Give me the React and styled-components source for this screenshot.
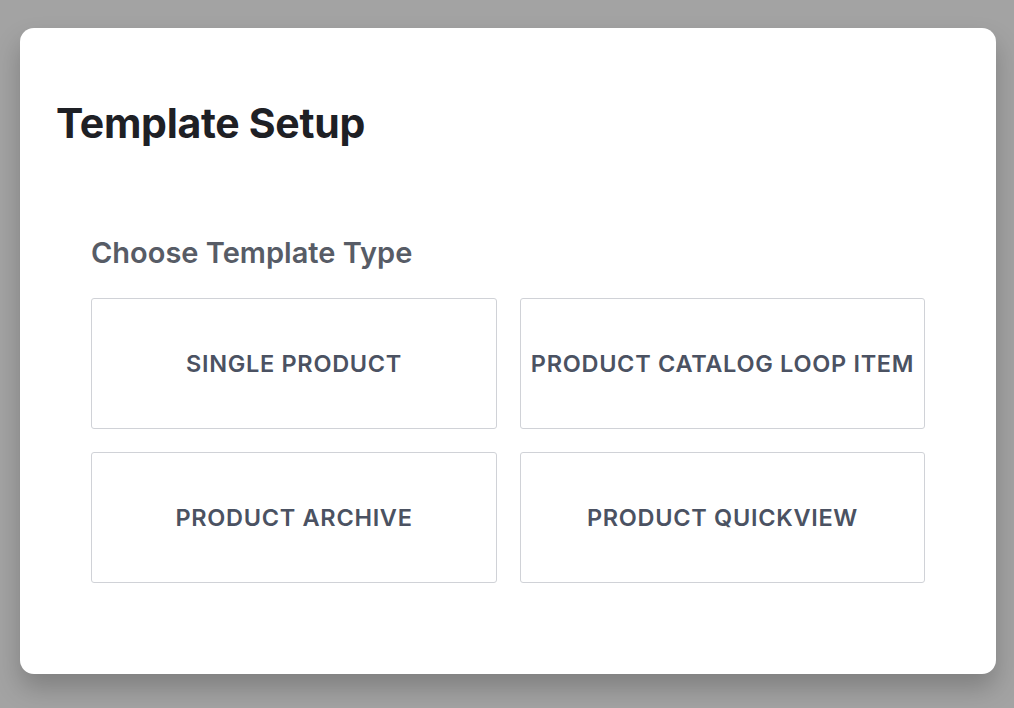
import styled, { createGlobalStyle } from "styled-components";

const GlobalStyle = createGlobalStyle`
  html, body {
    margin: 0;
    padding: 0;
    background: #a3a3a3;
    font-family: Inter, "Noto Sans", sans-serif;
  }
`;

const Backdrop = styled.div`
  width: 1014px;
  height: 708px;
  padding: 28px 18px 0 20px;
  box-sizing: border-box;
`;

const Modal = styled.div`
  width: 976px;
  height: 646px;
  box-sizing: border-box;
  background: #fff;
  border-radius: 14px;
  box-shadow: 0 14px 26px rgba(0, 0, 0, 0.22);
  padding: 71px 36px 0 36px;
`;

const Title = styled.h1`
  margin: 0;
  font-size: 41px;
  line-height: 48px;
  font-weight: 700;
  color: #1e2025;
  letter-spacing: -0.3px;
`;

const Section = styled.div`
  padding: 88px 35px 0 35px;
`;

const Label = styled.h2`
  margin: 0 0 27px;
  font-size: 29px;
  line-height: 36px;
  font-weight: 600;
  color: #575c66;
`;

const Grid = styled.div`
  display: grid;
  grid-template-columns: 406px 405px;
  grid-auto-rows: 131px;
  gap: 23px 23px;
`;

const Card = styled.button`
  display: flex;
  align-items: center;
  justify-content: center;
  background: #fff;
  border: 1.5px solid #d0d2d7;
  border-radius: 3px;
  padding: 0;
  font-family: Inter, "Noto Sans", sans-serif;
  font-size: 23.5px;
  font-weight: 600;
  letter-spacing: 0.7px;
  color: #4b5262;
  cursor: pointer;
`;

const types = [
  "SINGLE PRODUCT",
  "PRODUCT CATALOG LOOP ITEM",
  "PRODUCT ARCHIVE",
  "PRODUCT QUICKVIEW",
];

export default function App() {
  return (
    <Backdrop>
      <GlobalStyle />
      <Modal>
        <Title>Template Setup</Title>
        <Section>
          <Label>Choose Template Type</Label>
          <Grid>
            {types.map((t) => (
              <Card key={t}>{t}</Card>
            ))}
          </Grid>
        </Section>
      </Modal>
    </Backdrop>
  );
}
